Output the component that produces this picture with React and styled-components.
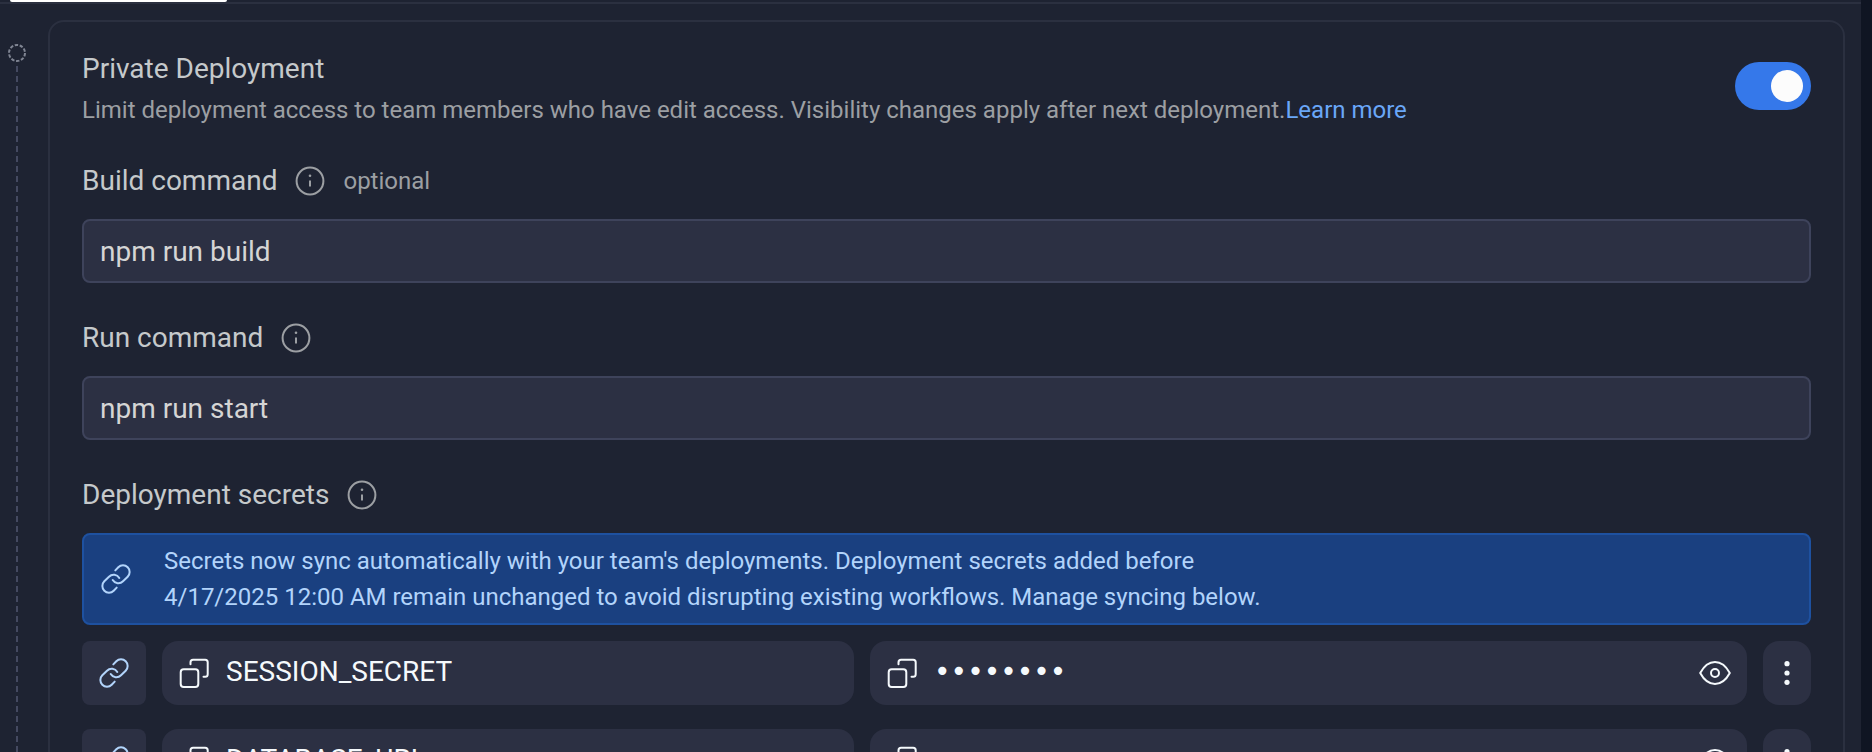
import React, { useState } from "react";
import styled, { createGlobalStyle } from "styled-components";

const colors = {
  page: "#0f1523",
  surface: "#1e2332",
  field: "#2c3043",
  outline: "#2b3040",
  fieldOutline: "#3e435b",
  text: "#c5c9cb",
  muted: "#9c9fa3",
  bright: "#f5f9fc",
  blue: "#3578ea",
  link: "#6aa7f8",
  pale: "#b2d4fb",
  banner: "#1a4080",
  bannerOutline: "#1e51a0",
};

const GlobalStyle = createGlobalStyle`
  *, *::before, *::after { box-sizing: border-box; }
  body {
    margin: 0;
    background: ${colors.page};
    color: ${colors.text};
    font-family: Roboto, "Liberation Sans", sans-serif;
    font-size: 28px;
    font-weight: 450;
  }
`;

const Shell = styled.div`
  height: 100vh;
  margin-right: 11px;
  overflow: hidden;
  background: ${colors.surface};
`;

const TabBar = styled.div`
  height: 4px;
  padding-left: 10px;
  border-bottom: 2px solid ${colors.outline};
`;

const ActiveTab = styled.div`
  width: 217px;
  height: 2px;
  border-radius: 0 0 2px 2px;
  background: #fff;
`;

const Content = styled.main`
  display: flex;
  gap: 22px;
  padding: 16px 16px 0 8px;
`;

const Timeline = styled.div`
  display: flex;
  flex-direction: column;
  align-items: center;
  gap: 4px;
  width: 18px;
  padding-top: 24px;
`;

const TimelineTrack = styled.div`
  flex: 1;
  width: 2px;
  background: repeating-linear-gradient(#444960 0 6px, transparent 6px 10px);
`;

const Card = styled.section`
  flex: 1;
  display: flex;
  flex-direction: column;
  gap: 36px;
  min-width: 0;
  padding: 32px;
  border: 2px solid ${colors.outline};
  border-radius: 16px;
`;

const Header = styled.div`
  display: flex;
  justify-content: space-between;
  align-items: flex-start;
`;

const Title = styled.h2`
  margin: 0 0 10px;
  font-size: 28px;
  line-height: 30px;
  font-weight: inherit;
`;

const Description = styled.p`
  margin: 0;
  color: ${colors.muted};
  font-size: 24px;
  line-height: 32px;
`;

const Link = styled.a`
  color: ${colors.link};
  text-decoration: none;
`;

const Toggle = styled.input`
  appearance: none;
  flex: none;
  display: flex;
  width: 76px;
  height: 48px;
  margin: 8px 0 0;
  padding: 8px;
  border-radius: 24px;
  background: ${colors.field};
  cursor: pointer;
  &::before {
    content: "";
    width: 32px;
    height: 32px;
    border-radius: 50%;
    background: #fcfcfc;
  }
  &:checked {
    justify-content: flex-end;
    background: ${colors.blue};
  }
`;

const Field = styled.div`
  display: flex;
  flex-direction: column;
  gap: 19px;
`;

const LabelRow = styled.div`
  display: flex;
  align-items: center;
  gap: 17px;
  height: 38px;
`;

const Label = styled.label`
  line-height: 38px;
`;

const Heading = styled.h3`
  margin: 0;
  font-size: 28px;
  line-height: 38px;
  font-weight: inherit;
`;

const Hint = styled.span`
  color: ${colors.muted};
  font-size: 24px;
`;

const TextInput = styled.input`
  width: 100%;
  height: 64px;
  padding: 0 16px;
  border: 2px solid ${colors.fieldOutline};
  border-radius: 8px;
  background: ${colors.field};
  color: #d5d5d5;
  font: inherit;
`;

const SecretsBody = styled.div`
  display: flex;
  flex-direction: column;
  gap: 16px;
`;

const Banner = styled.div`
  display: flex;
  align-items: center;
  gap: 32px;
  padding: 8px 16px;
  border: 2px solid ${colors.bannerOutline};
  border-radius: 8px;
  background: ${colors.banner};
  color: ${colors.pale};
  font-size: 24px;
  line-height: 36px;
`;

const SecretList = styled.ul`
  display: flex;
  flex-direction: column;
  gap: 24px;
  margin: 0;
  padding: 0;
  list-style: none;
`;

const SecretRow = styled.li`
  display: flex;
  gap: 16px;
`;

const BoxButton = styled.button`
  flex: none;
  display: flex;
  align-items: center;
  justify-content: center;
  width: ${(p) => p.$width};
  height: 64px;
  padding: 0;
  border: 0;
  border-radius: ${(p) => p.$radius};
  background: ${colors.field};
  color: ${(p) => p.$color};
  cursor: pointer;
`;

const Cell = styled.div`
  flex: ${(p) => p.$grow} 1 0;
  display: flex;
  align-items: center;
  gap: 16px;
  min-width: 0;
  height: 64px;
  padding: 0 16px;
  border-radius: 16px;
  background: ${colors.field};
  color: ${colors.bright};
`;

const SecretName = styled.span`
  padding-bottom: 4px;
`;

const IconButton = styled.button`
  flex: none;
  display: flex;
  padding: 0;
  border: 0;
  background: none;
  color: inherit;
  cursor: pointer;
`;

const SecretValue = styled.input`
  flex: 1;
  min-width: 0;
  padding: 0 0 4px;
  border: 0;
  outline: 0;
  background: none;
  color: inherit;
  font-family: "DejaVu Sans", sans-serif;
  font-size: 28px;
`;

const Svg = styled.svg`
  flex: none;
  display: block;
  fill: none;
  stroke: currentColor;
  stroke-width: 2;
  stroke-linecap: round;
  stroke-linejoin: round;
`;

const InfoIcon = () => (
  <Svg width="32" height="32" viewBox="0 0 32 32" color={colors.muted} role="img" aria-label="More information">
    <circle cx="16" cy="16" r="13.4" />
    <path d="M16 15.5v6" style={{ strokeLinecap: "butt" }} />
    <circle cx="16" cy="10.8" r="1.3" fill="currentColor" stroke="none" />
  </Svg>
);

const LinkIcon = () => (
  <Svg width="32" height="32" viewBox="0 0 32 32" aria-hidden="true">
    <path d="M15.3 7.4L18.3 4.3A6.6 6.6 0 0 1 27.7 13.7L23 18.3A6.6 6.6 0 0 1 12.7 17" />
    <path d="M16.7 24.6L13.7 27.7A6.6 6.6 0 0 1 4.3 18.3L9 13.7A6.6 6.6 0 0 1 19.3 15" />
  </Svg>
);

const CopyIcon = () => (
  <Svg width="32" height="32" viewBox="0 0 32 32" aria-hidden="true">
    <rect x="2.7" y="12.3" width="17.6" height="17.6" rx="3" />
    <path d="M12.5 7.3V5.3a2.5 2.5 0 0 1 2.5-2.5H27.2a2.5 2.5 0 0 1 2.5 2.5V17.3a2.5 2.5 0 0 1-2.5 2.5H25.5" />
  </Svg>
);

const EyeIcon = () => (
  <Svg width="32" height="32" viewBox="0 0 32 32" aria-hidden="true">
    <path d="M1.2 16C5 9 10 5 16 5s11 4 14.8 11C27 23 22 27 16 27S5 23 1.2 16Z" />
    <circle cx="16" cy="16" r="4" />
  </Svg>
);

const KebabIcon = () => (
  <Svg width="32" height="32" viewBox="0 0 32 32" aria-hidden="true">
    {[6.7, 16, 25.3].map((y) => (
      <circle key={y} cx="16" cy={y} r="2.6" fill="currentColor" stroke="none" />
    ))}
  </Svg>
);

const DashedCircle = styled.circle`
  stroke-linecap: butt;
  stroke-dasharray: 3.4 1.627;
`;

const StepIcon = () => (
  <Svg width="18" height="18" viewBox="0 0 18 18" color="#7f8492" aria-hidden="true">
    <DashedCircle cx="9" cy="9" r="8" />
  </Svg>
);

const secrets = ["SESSION_SECRET", "DATABASE_URL"];

function Secret({ name }) {
  const [shown, setShown] = useState(false);
  return (
    <SecretRow>
      <BoxButton type="button" $width="64px" $radius="8px" $color={colors.pale} aria-label={`Sync ${name}`}>
        <LinkIcon />
      </BoxButton>
      <Cell $grow={25}>
        <IconButton type="button" aria-label={`Copy name ${name}`}>
          <CopyIcon />
        </IconButton>
        <SecretName>{name}</SecretName>
      </Cell>
      <Cell $grow={32}>
        <IconButton type="button" aria-label={`Copy value of ${name}`}>
          <CopyIcon />
        </IconButton>
        <SecretValue type={shown ? "text" : "password"} defaultValue="password" readOnly aria-label={`Value of ${name}`} />
        <IconButton type="button" aria-label="Show value" onClick={() => setShown(!shown)}>
          <EyeIcon />
        </IconButton>
      </Cell>
      <BoxButton type="button" $width="48px" $radius="16px" $color={colors.bright} aria-label={`Options for ${name}`}>
        <KebabIcon />
      </BoxButton>
    </SecretRow>
  );
}

export default function App() {
  return (
    <>
      <GlobalStyle />
      <Shell>
        <TabBar>
          <ActiveTab />
        </TabBar>
        <Content>
          <Timeline>
            <StepIcon />
            <TimelineTrack />
          </Timeline>
          <Card>
            <Header>
              <div>
                <Title id="private-title">Private Deployment</Title>
                <Description>
                  Limit deployment access to team members who have edit access. Visibility changes apply after next
                  deployment.<Link href="#learn-more">Learn more</Link>
                </Description>
              </div>
              <Toggle type="checkbox" role="switch" defaultChecked aria-labelledby="private-title" />
            </Header>
            <Field>
              <LabelRow>
                <Label htmlFor="build">Build command</Label>
                <InfoIcon />
                <Hint>optional</Hint>
              </LabelRow>
              <TextInput id="build" defaultValue="npm run build" />
            </Field>
            <Field>
              <LabelRow>
                <Label htmlFor="run">Run command</Label>
                <InfoIcon />
              </LabelRow>
              <TextInput id="run" defaultValue="npm run start" />
            </Field>
            <Field>
              <LabelRow>
                <Heading>Deployment secrets</Heading>
                <InfoIcon />
              </LabelRow>
              <SecretsBody>
                <Banner>
                  <LinkIcon />
                  <span>
                    Secrets now sync automatically with your team's deployments. Deployment secrets added before
                    <br />
                    4/17/2025 12:00 AM remain unchanged to avoid disrupting existing workflows. Manage syncing below.
                  </span>
                </Banner>
                <SecretList>
                  {secrets.map((name) => (
                    <Secret key={name} name={name} />
                  ))}
                </SecretList>
              </SecretsBody>
            </Field>
          </Card>
        </Content>
      </Shell>
    </>
  );
}
